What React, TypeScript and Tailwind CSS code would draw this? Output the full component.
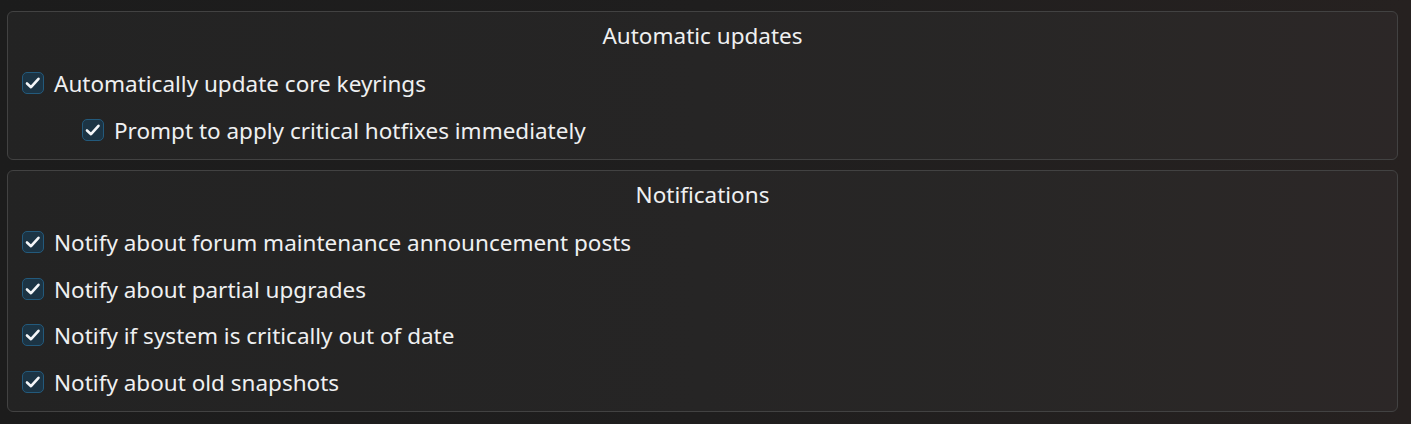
import React from "react";

const font = { fontFamily: '"Noto Sans", "Open Sans", sans-serif' };

function Check({ label, indent = false }: { label: string; indent?: boolean }) {
  return (
    <div className={`flex items-center h-[46.67px] ${indent ? "pl-[74px]" : "pl-[14px]"}`}>
      <div className="w-[22px] h-[22px] rounded-[5px] border border-[#235a7c] bg-[#1c3444] flex items-center justify-center shrink-0">
        <svg width="20" height="20" viewBox="0 0 20 20" fill="none">
          <path d="M4 10.5 L8 14.2 L15.5 5.8" stroke="#f4f6f8" strokeWidth="2.6" strokeLinecap="round" strokeLinejoin="round" />
        </svg>
      </div>
      <span className="ml-[10px] text-[22.5px] text-[#eff0f1] leading-none pt-[2px]">{label}</span>
    </div>
  );
}

function Group({ title, children, className = "" }: { title: string; children: React.ReactNode; className?: string }) {
  return (
    <div className={`rounded-[6px] border border-[#424242] bg-white/[0.03] pb-[5.5px] ${className}`}>
      <div className="h-[48px] flex items-center justify-center text-[22.5px] text-[#eff0f1]">{title}</div>
      {children}
    </div>
  );
}

export default function App() {
  return (
    <div
      className="w-[1411px] h-[424px] bg-gradient-to-r from-[#1c1c1c] via-[#1f1e1e] to-[#262120] pt-[11px] pl-[7px] pr-[13px]"
      style={font}
    >
      <Group title="Automatic updates">
        <Check label="Automatically update core keyrings" />
        <Check label="Prompt to apply critical hotfixes immediately" indent />
      </Group>
      <Group title="Notifications" className="mt-[10px]">
        <Check label="Notify about forum maintenance announcement posts" />
        <Check label="Notify about partial upgrades" />
        <Check label="Notify if system is critically out of date" />
        <Check label="Notify about old snapshots" />
      </Group>
    </div>
  );
}
